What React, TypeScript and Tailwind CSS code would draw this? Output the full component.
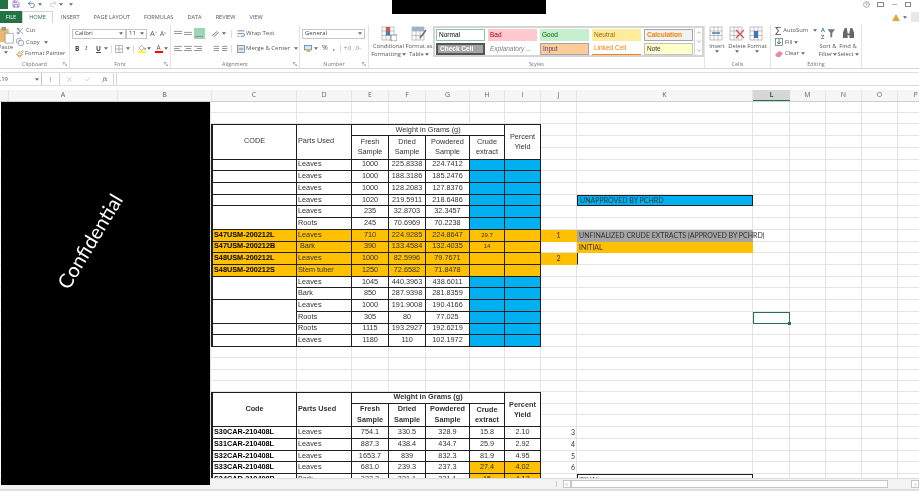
import React from 'react';
import { Scissors, Copy, Paintbrush, ChevronDown, ChevronUp, ChevronLeft, ChevronRight, Undo2, Redo2, Save, HelpCircle, Minus, X, Check } from 'lucide-react';

const Caret = ({ className = '' }: { className?: string }) => (
  <svg viewBox="0 0 6 4" className={`w-[4px] h-[3px] shrink-0 ${className}`}><path d="M0 0h6L3 4z" fill="#666" /></svg>
);

const Lines = ({ rows }: { rows: [number, number][] }) => (
  <svg viewBox="0 0 10 9" className="w-[9px] h-[8px]">
    {rows.map(([x, w], i) => <rect key={i} x={x} y={1 + i * 2.4} width={w} height="1" fill="#8a8a8a" />)}
  </svg>
);

const Launcher = () => (
  <svg viewBox="0 0 6 6" className="absolute right-[2px] bottom-[2px] w-[4px] h-[4px]"><path d="M0 .5h4M.5 0v4M2 2l4 4M6 3v3H3" stroke="#777" fill="none" strokeWidth=".8" /></svg>
);

const Group = ({ label, w, children, launcher }: { label: string; w: string; children: React.ReactNode; launcher?: boolean }) => (
  <div className={`relative flex flex-col shrink-0 border-r border-[#e4e4e4] ${w}`}>
    <div className="h-[36px] flex">{children}</div>
    <div className="text-center text-[5.5px] leading-[8px] text-[#777]">{label}</div>
    {launcher && <Launcher />}
  </div>
);

const ToolRow = ({ className = '', children }: { className?: string; children: React.ReactNode }) => (
  <div className={`flex items-center h-[11.5px] ${className}`}>{children}</div>
);

const Select = ({ text, w }: { text: string; w: string }) => (
  <div className={`flex items-center justify-between h-[10px] px-[2px] bg-white border border-[#c6c6c6] text-[6px] text-[#444] ${w}`}>
    <span>{text}</span><Caret />
  </div>
);

const StyleBox = ({ className, children }: { className: string; children: React.ReactNode }) => (
  <div className={`flex items-center w-[49px] h-[12px] px-[2px] text-[6.5px] leading-none truncate ${className}`}>{children}</div>
);

const GridIcon = ({ children }: { children?: React.ReactNode }) => (
  <svg viewBox="0 0 16 15" className="w-[16px] h-[15px]">
    <path d="M1 1h12v13H1zM1 5h12M1 9.5h12M5 1v13M9 1v13" fill="none" stroke="#a8a8a8" strokeWidth=".7" />
    {children}
  </svg>
);

const BigButton = ({ icon, top, bottom, w }: { icon: React.ReactNode; top: string; bottom?: string; w: string }) => (
  <div className={`flex flex-col items-center text-[5.8px] leading-[8px] text-[#555] ${w}`}>
    <div className="h-[16px] flex items-center">{icon}</div>
    <div className="mt-[1px] whitespace-nowrap">{top}</div>
    <div className="flex items-center gap-[1px] whitespace-nowrap">{bottom}<Caret /></div>
  </div>
);

const Ribbon = () => (
  <div className="flex h-[46px] bg-white border-b border-[#d4d4d4] pt-[2px] font-['Open_Sans',sans-serif]">
    <Group label="Clipboard" w="w-[70px]" launcher>
      <div className="w-[17px] flex flex-col items-center -ml-[3px] text-[5.8px] leading-[7px] text-[#555]">
        <svg viewBox="0 0 16 20" className="w-[16px] h-[18px] mt-[1px]">
          <rect x="0" y="3" width="11" height="15" fill="#e9b96e" />
          <rect x="7" y="8" width="9" height="11" fill="#fff" stroke="#888" strokeWidth=".7" />
          <rect x="3" y="1" width="5" height="4" fill="#9a9a9a" />
        </svg>
        <span>Paste</span><Caret />
      </div>
      <div className="flex flex-col pl-[2px] text-[5.8px] text-[#555] whitespace-nowrap">
        <ToolRow className="gap-[2px]"><Scissors className="w-[8px] h-[8px] text-[#6a7f96]" />Cut</ToolRow>
        <ToolRow className="gap-[2px]"><Copy className="w-[8px] h-[8px] text-[#6a7f96]" />Copy<Caret className="ml-[2px]" /></ToolRow>
        <ToolRow className="gap-[1px]"><Paintbrush className="w-[8px] h-[8px] text-[#b58a2d]" />Format Painter</ToolRow>
      </div>
    </Group>
    <Group label="Font" w="w-[101px]" launcher>
      <div className="flex flex-col pl-[2px] pt-[3px] gap-[4px]">
        <div className="flex items-center h-[11px]">
          <Select text="Calibri" w="w-[54px]" />
          <Select text="11" w="w-[21px]" />
          <span className="ml-[3px] text-[7.5px] text-[#555]">A<sup className="text-[#3c78b4] text-[4px]">^</sup></span>
          <span className="ml-[3px] text-[6.5px] text-[#555]">A<sup className="text-[#3c78b4] text-[4px]">v</sup></span>
        </div>
        <div className="flex items-center h-[11px] pl-[3px] text-[6.5px] text-[#444]">
          <b className="w-[10px]">B</b><i className="w-[11px] font-serif">I</i><u className="w-[8px] font-bold">U</u><Caret />
          <span className="w-[1px] h-[8px] bg-[#ddd] mx-[3px]" />
          <svg viewBox="0 0 9 9" className="w-[8px] h-[8px]"><path d="M.5.5h8v8h-8zM.5 4.5h8M4.5.5v8" stroke="#999" fill="none" strokeWidth=".8" /></svg>
          <Caret className="ml-[3px]" />
          <span className="w-[1px] h-[8px] bg-[#ddd] mx-[3px]" />
          <div className="flex flex-col items-center w-[9px]">
            <svg viewBox="0 0 9 6" className="w-[8px] h-[6px]"><path d="M1 3l3-3 3 3-3 3z" fill="#fff" stroke="#777" strokeWidth=".7" /><circle cx="8" cy="4" r="1" fill="#5a8fc7" /></svg>
            <div className="w-[8px] h-[2px] bg-[#ffff00]" />
          </div>
          <Caret className="ml-[1px]" />
          <div className="flex flex-col items-center w-[9px] ml-[3px] leading-[6px]">
            <span className="text-[6.5px] text-[#555]">A</span>
            <div className="w-[8px] h-[2px] bg-[#ff0000]" />
          </div>
          <Caret className="ml-[1px]" />
        </div>
      </div>
    </Group>
    <Group label="Alignment" w="w-[129px]" launcher>
      <div className="flex flex-col pl-[3px] pt-[3px] gap-[4px] text-[6px] text-[#555] whitespace-nowrap">
        <div className="flex items-center h-[11px]">
          <div className="w-[10px]"><Lines rows={[[0, 9], [0, 9]]} /></div>
          <div className="w-[10px] mt-[2px]"><Lines rows={[[0, 9], [0, 9]]} /></div>
          <div className="w-[11px] h-[11px] bg-[#9fd5b7] flex items-end justify-center"><Lines rows={[[0, 0], [0, 0], [0, 9]]} /></div>
          <svg viewBox="0 0 10 8" className="ml-[6px] w-[9px] h-[8px]"><path d="M1 6l6-5M3 7l6-5" stroke="#666" strokeWidth=".9" /></svg>
          <Caret className="ml-[2px]" />
          <span className="w-[1px] h-[8px] bg-[#ddd] mx-[5px]" />
          <svg viewBox="0 0 9 9" className="w-[8px] h-[8px] mr-[1px]"><path d="M.5 1h8M.5 4h6.5a1.5 1.5 0 0 1 0 3H4M.5 7h2" stroke="#4a7fb5" fill="none" strokeWidth="1" /></svg>
          Wrap Text
        </div>
        <div className="flex items-center h-[11px]">
          <div className="w-[10px]"><Lines rows={[[0, 9], [0, 6], [0, 9]]} /></div>
          <div className="w-[10px]"><Lines rows={[[0, 9], [2, 6], [0, 9]]} /></div>
          <div className="w-[11px]"><Lines rows={[[0, 9], [3, 6], [0, 9]]} /></div>
          <div className="w-[10px] ml-[6px]"><Lines rows={[[3, 6], [3, 6], [3, 6]]} /></div>
          <div className="w-[9px]"><Lines rows={[[1, 6], [1, 6], [1, 6]]} /></div>
          <span className="w-[1px] h-[8px] bg-[#ddd] mr-[5px] ml-[1px]" />
          <svg viewBox="0 0 9 9" className="w-[8px] h-[8px] mr-[1px]"><rect x=".5" y=".5" width="8" height="8" fill="#dbe5ee" stroke="#777" strokeWidth=".8" /><path d="M2 4.5h5" stroke="#4a7fb5" /></svg>
          Merge &amp; Center<Caret className="ml-[4px]" />
        </div>
      </div>
    </Group>
    <Group label="Number" w="w-[69px]" launcher>
      <div className="flex flex-col pl-[2px] pt-[3px] gap-[4px] text-[#555]">
        <div className="h-[11px] flex items-center"><Select text="General" w="w-[63px]" /></div>
        <div className="flex items-center h-[11px] pl-[2px] text-[7px]">
          <svg viewBox="0 0 9 8" className="w-[8px] h-[7px]"><rect x=".5" y=".5" width="8" height="5" fill="#d8e6f3" stroke="#5a8fc7" /><rect x="3" y="5" width="4" height="3" fill="#e8b04a" /></svg>
          <Caret className="ml-[2px]" />
          <span className="ml-[4px] w-[11px]">%</span>
          <span className="w-[7px] font-bold">,</span>
          <span className="w-[1px] h-[8px] bg-[#ddd] mr-[3px]" />
          <span className="w-[11px] text-[5px] text-[#4a7fb5]">+.0</span>
          <span className="text-[5px] text-[#4a7fb5]">.0-</span>
        </div>
      </div>
    </Group>
    <div className="w-[336px] shrink-0 flex flex-col border-r border-[#e4e4e4]">
      <div className="h-[36px] flex">
        <BigButton w="w-[36px] ml-[2px]" top="Conditional" bottom="Formatting" icon={
          <GridIcon><rect x="5" y="1" width="4" height="4" fill="#d9534f" /><rect x="5" y="5" width="4" height="4.5" fill="#4a7fb5" /><rect x="10" y="9" width="6" height="6" fill="#fff" stroke="#666" strokeWidth=".7" /></GridIcon>
        } />
        <BigButton w="w-[26px]" top="Format as" bottom="Table" icon={
          <GridIcon><rect x="1" y="1" width="12" height="4" fill="#9db4cc" /><path d="M9 12l6-8" stroke="#666" strokeWidth="1.4" /></GridIcon>
        } />
        <div className="flex ml-[1px] h-[31px] mt-[1px] border-2 border-[#d4d4d4] pl-[1px]">
          <div className="grid grid-cols-[repeat(5,49px)] gap-x-[3px] gap-y-[2px] pt-[1px] w-[258px] font-['Liberation_Sans',sans-serif]">
            <StyleBox className="bg-white border border-[#86c8a3] text-black">Normal</StyleBox>
            <StyleBox className="bg-[#ffc7ce] text-[#9c0006]">Bad</StyleBox>
            <StyleBox className="bg-[#c6efce] text-[#006100]">Good</StyleBox>
            <StyleBox className="bg-[#ffeb9c] text-[#9c6500]">Neutral</StyleBox>
            <StyleBox className="bg-[#f2f2f2] border border-[#a5a5a5] text-[#fa7d00] font-bold">Calculation</StyleBox>
            <StyleBox className="bg-[#a5a5a5] border-2 border-[#555] text-white font-bold">Check Cell</StyleBox>
            <StyleBox className="italic text-[#7f7f7f]">Explanatory ...</StyleBox>
            <StyleBox className="bg-[#ffcc99] border border-[#a5a5a5] text-[#3f3f76]">Input</StyleBox>
            <StyleBox className="border-b border-[#ff8001] text-[#fa7d00]">Linked Cell</StyleBox>
            <StyleBox className="bg-[#ffffcc] border border-[#c2c2c2] text-[#333]">Note</StyleBox>
          </div>
          <div className="w-[8px] flex flex-col items-center justify-between border-l border-[#d4d4d4] text-[#666]">
            <ChevronUp className="w-[6px] h-[9px]" />
            <ChevronDown className="w-[6px] h-[9px]" />
            <ChevronDown className="w-[6px] h-[9px]" />
          </div>
        </div>
      </div>
      <div className="text-center text-[5.5px] leading-[8px] text-[#777]">Styles</div>
    </div>
    <Group label="Cells" w="w-[66px]">
      <div className="flex pl-[2px]">
        <BigButton w="w-[20px]" top="Insert" icon={<GridIcon><path d="M3 7h8" stroke="#3c78b4" strokeWidth="1.4" /></GridIcon>} />
        <BigButton w="w-[20px]" top="Delete" icon={<GridIcon><path d="M7 4l8 8M15 4l-8 8" stroke="#d9534f" strokeWidth="1.2" /></GridIcon>} />
        <BigButton w="w-[20px]" top="Format" icon={<GridIcon><rect x="5" y="5" width="4" height="7" fill="#3c78b4" /></GridIcon>} />
      </div>
    </Group>
    <Group label="Editing" w="w-[91px]">
      <div className="flex flex-col pl-[4px] w-[47px] text-[5.8px] text-[#555] whitespace-nowrap">
        <ToolRow className="gap-[2px]"><span className="text-[11px] leading-none text-[#444]">Σ</span>AutoSum<Caret className="ml-[3px]" /></ToolRow>
        <ToolRow className="gap-[2px]"><svg viewBox="0 0 8 8" className="w-[8px] h-[8px]"><rect x=".5" y=".5" width="7" height="7" fill="#fff" stroke="#666" strokeWidth=".7" /><path d="M4 1v5M2 4l2 2 2-2" stroke="#3c78b4" fill="none" /></svg>Fill<Caret /></ToolRow>
        <ToolRow className="gap-[2px]"><svg viewBox="0 0 8 7" className="w-[8px] h-[7px]"><path d="M0 5l4-4 4 2-3 4H2z" fill="#e88a9a" /></svg>Clear<Caret /></ToolRow>
      </div>
      <BigButton w="w-[20px]" top="Sort &amp;" bottom="Filter" icon={
        <svg viewBox="0 0 16 14" className="w-[15px] h-[14px]"><text x="0" y="6" fontSize="6" fill="#3c78b4" fontWeight="bold">A</text><text x="0" y="13" fontSize="6" fill="#8e5bb5" fontWeight="bold">Z</text><path d="M7 3h8l-3 4v4l-2 1V7z" fill="#777" /></svg>
      } />
      <BigButton w="w-[20px]" top="Find &amp;" bottom="Select" icon={
        <svg viewBox="0 0 14 13" className="w-[13px] h-[12px]"><path d="M1 12V6l2-5h2l1 5v1h2V6l1-5h2l2 5v6H8V9H6v3z" fill="#666" /></svg>
      } />
    </Group>
  </div>
);

const Blanks = ({ n }: { n: number }) => (
  <>{Array.from({ length: n }).map((_, i) => <div key={i} className="border-r border-b border-[#e4e4e4]" />)}</>
);

const cellBase = 'flex items-center justify-center overflow-hidden whitespace-nowrap border-r border-b border-[#1f1f1f] text-[#333]';

const T = ({ className = '', small, children }: { className?: string; small?: boolean; children?: React.ReactNode }) => (
  <div className={`${cellBase} ${small ? 'text-[6px]' : 'text-[7.3px]'} ${className}`}>{children}</div>
);

type Row = { code?: string; span?: boolean; skip?: boolean; part: string; f: string; d: string; p: string; h?: string; orange?: boolean; indent?: boolean };

const upper: Row[] = [
  { part: 'Leaves', f: '1000', d: '225.8338', p: '224.7412' },
  { part: 'Leaves', f: '1000', d: '188.3186', p: '185.2476' },
  { part: 'Leaves', f: '1000', d: '128.2083', p: '127.8376' },
  { part: 'Leaves', f: '1020', d: '219.5911', p: '218.6486' },
  { span: true, part: 'Leaves', f: '235', d: '32.8703', p: '32.3457' },
  { skip: true, part: 'Roots', f: '245', d: '70.6969', p: '70.2238' },
  { code: 'S47USM-200212L', orange: true, part: 'Leaves', f: '710', d: '224.9285', p: '224.8647', h: '29.7' },
  { code: 'S47USM-200212B', orange: true, indent: true, part: 'Bark', f: '390', d: '133.4584', p: '132.4035', h: '14' },
  { code: 'S48USM-200212L', orange: true, part: 'Leaves', f: '1000', d: '82.5996', p: '79.7671' },
  { code: 'S48USM-200212S', orange: true, part: 'Stem tuber', f: '1250', d: '72.6582', p: '71.8478' },
  { span: true, part: 'Leaves', f: '1045', d: '440.3963', p: '438.6011' },
  { skip: true, part: 'Bark', f: '850', d: '287.9398', p: '281.8359' },
  { span: true, part: 'Leaves', f: '1000', d: '191.9008', p: '190.4166' },
  { skip: true, part: 'Roots', f: '305', d: '80', p: '77.025' },
  { part: 'Roots', f: '1115', d: '193.2927', p: '192.6219' },
  { part: 'Leaves', f: '1180', d: '110', p: '102.1972' },
];

const lower = [
  { code: 'S30CAR-210408L', f: '754.1', d: '330.5', p: '328.9', h: '15.8', i: '2.10', n: '3' },
  { code: 'S31CAR-210408L', f: '887.3', d: '438.4', p: '434.7', h: '25.9', i: '2.92', n: '4' },
  { code: 'S32CAR-210408L', f: '1653.7', d: '839', p: '832.3', h: '81.9', i: '4.95', n: '5' },
  { code: 'S33CAR-210408L', f: '681.0', d: '239.3', p: '237.3', h: '27.4', i: '4.02', n: '6', orange: true },
];

const J = ({ className = '', children }: { className?: string; children?: React.ReactNode }) => (
  <div className={`flex items-center justify-center border-r border-b text-[7px] text-[#333] font-['Lato',sans-serif] ${className}`}>{children}</div>
);

const K = ({ className = '', children }: { className?: string; children?: React.ReactNode }) => (
  <div className={`flex items-center pl-[2px] whitespace-nowrap text-[7px] text-[#333] font-['Lato',sans-serif] ${className}`}>{children}</div>
);

const sideCells: Record<number, React.ReactNode> = {
  3: <><Blanks n={1} /><K className="bg-[#00b0f0] border border-[#1f1f1f]">UNAPPROVED BY PCHRD</K></>,
  6: <><J className="bg-[#ffc000] border-[#ffc000]">1</J><K className="bg-[#a5a5a5]">UNFINALIZED CRUDE EXTRACTS (APPROVED BY PCHRD)</K></>,
  7: <><Blanks n={1} /><K className="bg-[#ffc000]">INITIAL</K></>,
  8: <><J className="bg-[#ffc000] border-[#ffc000]">2</J><K className="border-l border-r border-b border-l-[#1f1f1f] border-r-[#e4e4e4] border-b-[#e4e4e4]" /></>,
};

const Sheet = () => (
  <div className="grid flex-1 overflow-hidden bg-white grid-cols-[9px_109px_93px_86px_55px_37px_37px_44px_35px_36px_36px_176px_37px_36px_36px_36px_36px] grid-rows-[11.2px_11.2px_repeat(19,11.72px)_repeat(4,11.25px)_repeat(8,11.72px)]">
    <Blanks n={34} />

    {/* first table, three header rows */}
    <Blanks n={3} />
    <T className="row-span-3 border-t border-l-2 border-l-[#1f1f1f] border-t-[#1f1f1f]">CODE</T>
    <T className="row-span-3 border-t border-t-[#1f1f1f] justify-start pl-[1px]">Parts Used</T>
    <T className="col-span-4 border-t border-t-[#1f1f1f]">Weight in Grams (g)</T>
    <T className="row-span-3 border-t border-t-[#1f1f1f] text-center leading-[10px]">Percent<br />Yield</T>
    <Blanks n={7} />
    <Blanks n={3} />
    <T className="row-span-2 text-center leading-[10.5px]">Fresh<br />Sample</T>
    <T className="row-span-2 text-center leading-[10.5px]">Dried<br />Sample</T>
    <T className="row-span-2 text-center leading-[10.5px]">Powdered<br />Sample</T>
    <T className="row-span-2 text-center leading-[10px]">Crude<br />extract</T>
    <Blanks n={7} />
    <Blanks n={3} />
    <Blanks n={7} />

    {upper.map((r, i) => {
      const bg = r.orange ? 'bg-[#ffc000]' : '';
      return (
        <React.Fragment key={i}>
          <Blanks n={3} />
          {!r.skip && (
            <T className={`border-l-2 border-l-[#1f1f1f] justify-start pl-[1px] font-bold text-black ${r.span ? 'row-span-2' : ''} ${bg}`}>{r.code}</T>
          )}
          <T className={`justify-start pl-[1px] ${bg}`}>{r.indent ? <span className="pl-[2px]">{r.part}</span> : r.part}</T>
          <T className={bg}>{r.f}</T>
          <T className={bg}>{r.d}</T>
          <T className={bg}>{r.p}</T>
          <T small className={r.orange ? bg : 'bg-[#00b0f0]'}>{r.h}</T>
          <T className={r.orange ? bg : 'bg-[#00b0f0]'} />
          {sideCells[i] ?? <Blanks n={2} />}
          {i === 13 ? (
            <div className="relative border border-[#217346]">
              <div className="absolute -right-[2px] -bottom-[2px] w-[3px] h-[3px] bg-[#217346]" />
            </div>
          ) : <Blanks n={1} />}
          <Blanks n={4} />
        </React.Fragment>
      );
    })}

    <Blanks n={68} />

    {/* second table */}
    <Blanks n={3} />
    <T className="row-span-3 border-t border-l-2 border-l-[#1f1f1f] border-t-[#1f1f1f] font-bold">Code</T>
    <T className="row-span-3 border-t border-t-[#1f1f1f] justify-start pl-[1px] font-bold">Parts Used</T>
    <T className="col-span-4 border-t border-t-[#1f1f1f] font-bold">Weight in Grams (g)</T>
    <T className="row-span-3 border-t border-t-[#1f1f1f] text-center leading-[10px] font-bold">Percent<br />Yield</T>
    <Blanks n={7} />
    <Blanks n={3} />
    <T className="row-span-2 text-center leading-[10.5px] font-bold">Fresh<br />Sample</T>
    <T className="row-span-2 text-center leading-[10.5px] font-bold">Dried<br />Sample</T>
    <T className="row-span-2 text-center leading-[10.5px] font-bold">Powdered<br />Sample</T>
    <T className="row-span-2 text-center leading-[10px] font-bold">Crude<br />extract</T>
    <Blanks n={7} />
    <Blanks n={3} />
    <Blanks n={7} />

    {lower.map((r) => (
      <React.Fragment key={r.code}>
        <Blanks n={3} />
        <T className="border-l-2 border-l-[#1f1f1f] justify-start pl-[1px] font-bold text-black">{r.code}</T>
        <T className="justify-start pl-[1px]">Leaves</T>
        <T>{r.f}</T>
        <T>{r.d}</T>
        <T>{r.p}</T>
        <T className={r.orange ? 'bg-[#ffc000]' : ''}>{r.h}</T>
        <T className={r.orange ? 'bg-[#ffc000]' : ''}>{r.i}</T>
        <J className="justify-end pr-[1px] border-[#e4e4e4]">{r.n}</J>
        <Blanks n={6} />
      </React.Fragment>
    ))}
    <Blanks n={3} />
    <T className="border-l-2 border-l-[#1f1f1f] justify-start pl-[1px] font-bold text-black">S34CAR-210408B</T>
    <T className="justify-start pl-[1px]">Bark</T>
    <T>333.3</T>
    <T>331.1</T>
    <T>331.1</T>
    <T className="bg-[#ffc000]">15</T>
    <T className="bg-[#ffc000]">4.17</T>
    <Blanks n={1} />
    <K className="border-t border-l border-r border-[#1f1f1f]">FINAL</K>
    <Blanks n={5} />
  </div>
);

const columns = [
  ['', 'w-[9px]'], ['A', 'w-[109px]'], ['B', 'w-[94px]'], ['C', 'w-[85px]'], ['D', 'w-[55px]'], ['E', 'w-[37px]'], ['F', 'w-[37px]'], ['G', 'w-[44px]'],
  ['H', 'w-[35px]'], ['I', 'w-[36px]'], ['J', 'w-[36px]'], ['K', 'w-[176px]'], ['L', 'w-[37px]'], ['M', 'w-[36px]'], ['N', 'w-[36px]'], ['O', 'w-[36px]'], ['P', 'w-[36px]'],
];

export default function App() {
  return (
    <div className="relative w-[919px] h-[491px] overflow-hidden bg-white flex flex-col blur-[0.35px] font-['Liberation_Sans',sans-serif]">
      {/* quick access toolbar, cut off at the top of the shot */}
      <div className="flex items-end justify-between h-[10px] overflow-hidden pb-[2px] font-['Open_Sans',sans-serif]">
        <div className="flex items-center h-[8px] text-[#555]">
          <div className="w-[8px] h-[9px] bg-[#217346]" />
          <Save className="ml-[4px] w-[8px] h-[8px] text-[#7b4fa3]" />
          <Undo2 className="ml-[7px] w-[9px] h-[9px] text-[#2f6db0]" />
          <Caret className="ml-[2px]" />
          <Redo2 className="ml-[7px] w-[8px] h-[8px] text-[#bbb]" />
          <Caret className="ml-[2px]" />
          <Caret className="ml-[6px]" />
        </div>
        <div className="flex items-center h-[8px] gap-[7px] pr-[8px] text-[#777]">
          <HelpCircle className="w-[7px] h-[7px]" />
          <div className="w-[7px] h-[5px] border border-[#888]" />
          <Minus className="w-[7px] h-[7px]" />
          <div className="w-[6px] h-[5px] border border-[#888]" />
        </div>
      </div>

      {/* tabs */}
      <div className="flex items-end justify-between h-[13px] font-['Open_Sans',sans-serif] text-[5.6px] text-[#555]">
        <div className="flex items-stretch h-[12px]">
          <div className="w-[22px] flex items-center justify-center bg-[#217346] text-white">FILE</div>
          <div className="w-[31px] flex items-center justify-center border border-b-0 border-[#d4d4d4] text-[#217346]">HOME</div>
          <div className="flex items-center gap-[14px] pl-[8px]">
            <span>INSERT</span><span>PAGE LAYOUT</span><span>FORMULAS</span><span>DATA</span><span>REVIEW</span><span>VIEW</span>
          </div>
        </div>
        <div className="flex items-center h-[12px]">
          <svg viewBox="0 0 10 9" className="w-[8px] h-[7px]"><path d="M5 0l5 9H0z" fill="#e8a33d" /></svg>
          <Caret className="ml-[3px]" />
          <div className="ml-[4px] w-[8px] h-[10px] bg-[#e8e8e8]" />
        </div>
      </div>

      <Ribbon />

      {/* formula bar */}
      <div className="h-[4px] border-b border-[#e0e0e0]" />
      <div className="flex items-center h-[13px] bg-white border-b border-[#dcdcdc] font-['Open_Sans',sans-serif] text-[6px] text-[#555]">
        <div className="w-[44px] h-full flex items-center justify-between pr-[2px] border-r border-[#c6c6c6] -ml-[2px]">L19<Caret /></div>
        <span className="ml-[8px] mr-[8px] w-[1px] h-[5px] bg-[#bbb]" />
        <div className="w-[55px] h-full flex items-center justify-around border-x border-[#d4d4d4] text-[#aaa]">
          <X className="w-[7px] h-[7px]" /><Check className="w-[7px] h-[7px]" /><i className="font-serif text-[#555]">fx</i>
        </div>
        <div className="ml-[2px] flex-1 h-full border-l border-[#d4d4d4]" />
      </div>
      <div className="h-[4px]" />

      {/* column letters */}
      <div className="flex h-[12px] bg-[#f6f6f6] border-b border-[#cfcfcf] font-['Open_Sans',sans-serif] text-[7px] text-[#666]">
        {columns.map(([name, w]) => (
          name === 'L' ? (
            <div key={name} className={`${w} shrink-0 flex items-center justify-center bg-[#d6d6d6] border-b border-[#217346] text-[#217346] font-bold`}>{name}</div>
          ) : (
            <div key={name} className={`${w} shrink-0 flex items-center justify-center border-r border-[#e4e4e4]`}>{name}</div>
          )
        ))}
      </div>

      <Sheet />

      {/* horizontal scroll bar */}
      <div className="flex items-center h-[13px] bg-[#f3f3f3] border-t border-[#dcdcdc] border-b-2 border-b-[#d5e5dc] text-[#666]">
        <span className="ml-[556px] w-[1px] h-[6px] bg-[#ccc]" />
        <div className="ml-[6px] w-[8px] h-[8px] bg-white border border-[#c6c6c6] flex items-center justify-center"><ChevronLeft className="w-[5px] h-[5px]" /></div>
        <div className="w-[318px] h-[8px] bg-white border border-[#c6c6c6]" />
        <div className="ml-[23px] w-[8px] h-[8px] bg-white border border-[#c6c6c6] flex items-center justify-center"><ChevronRight className="w-[5px] h-[5px]" /></div>
      </div>

      {/* redaction blocks pasted over the shot */}
      <div className="absolute left-[392px] top-0 w-[154px] h-[14px] bg-black" />
      <div className="absolute left-[1px] top-[102px] w-[209px] h-[383px] bg-black flex items-center justify-center">
        <span className="-rotate-[59deg] -translate-x-[16px] -translate-y-[53px] text-white text-[20px] font-['Lato',sans-serif]">Confidential</span>
      </div>
    </div>
  );
}
